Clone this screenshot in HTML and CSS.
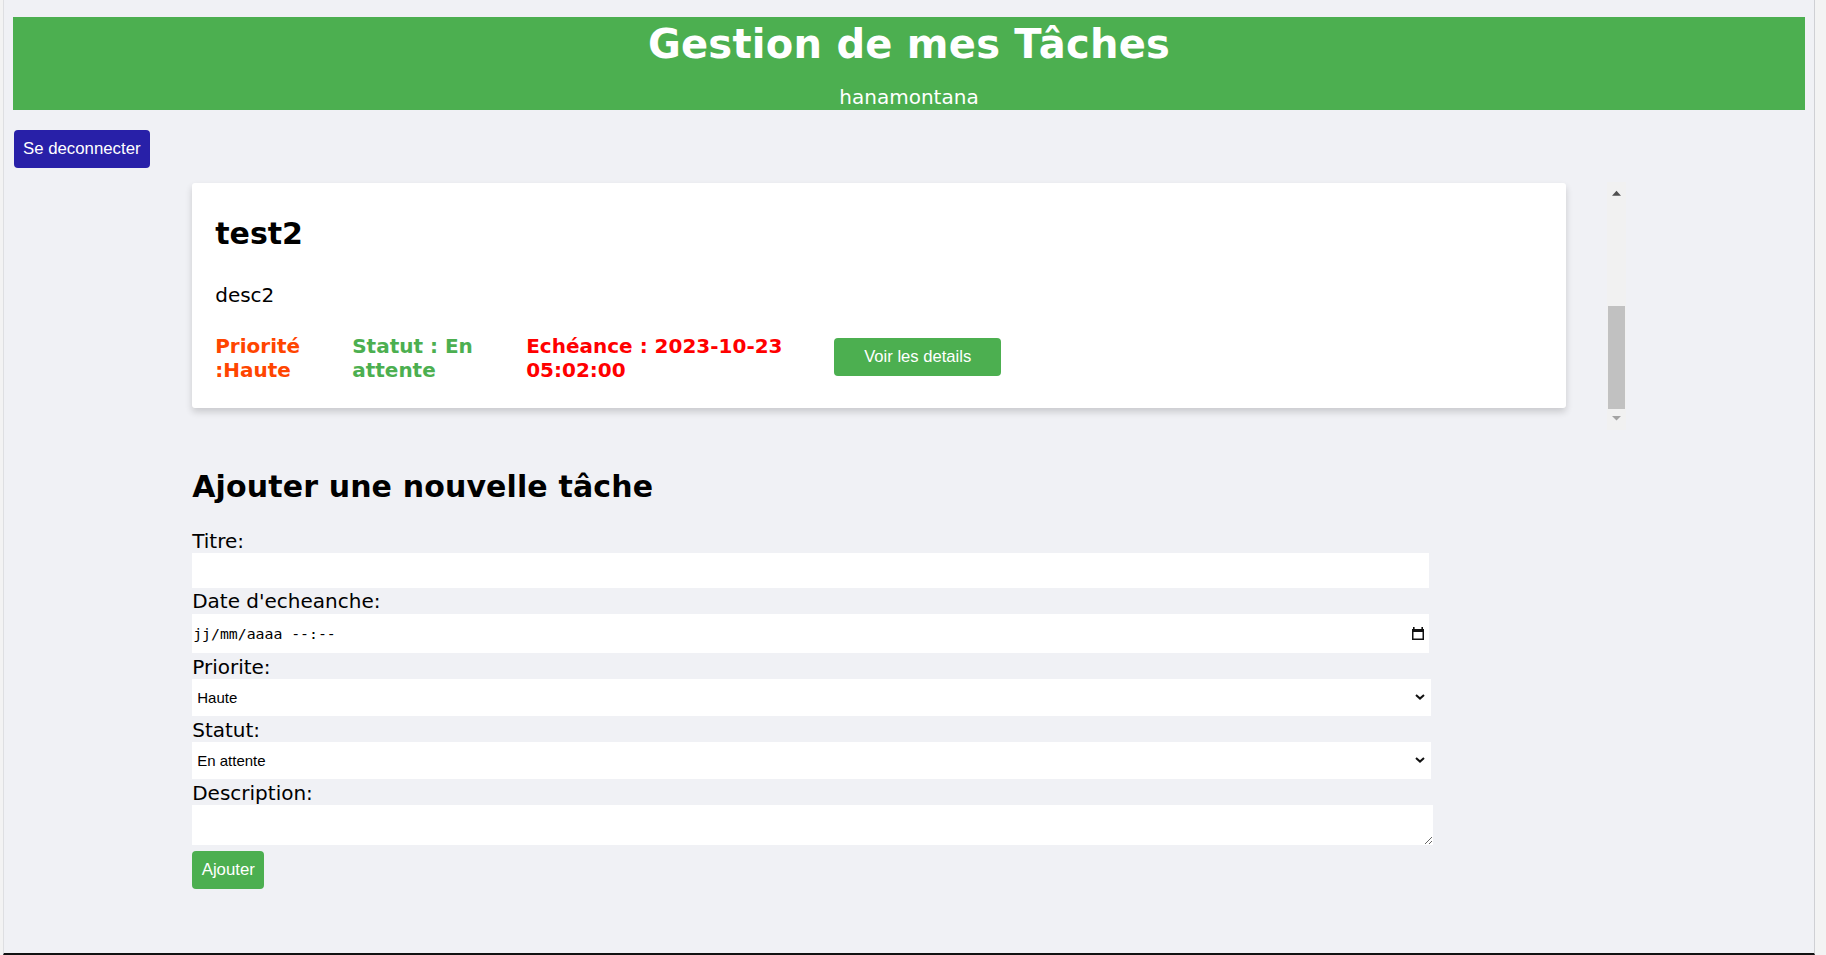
FILE: index.html
```html
<!DOCTYPE html>
<html lang="fr">
<head>
<meta charset="utf-8">
<title>Gestion de mes Tâches</title>
<link rel="stylesheet" href="styles.css">
</head>
<body>
<div class="viewport">
  <header class="banner">
    <h1 class="banner-title">Gestion de mes Tâches</h1>
    <p class="banner-user">hanamontana</p>
  </header>

  <button class="btn btn-logout" type="button">Se deconnecter</button>

  <main class="main">
    <div class="task-list">
      <div class="task-items">
        <article class="task-card">
          <h2 class="task-title">test2</h2>
          <p class="task-desc">desc2</p>
          <div class="task-meta">
            <div class="meta meta-priority">Priorité :Haute</div>
            <div class="meta meta-status">Statut : En attente</div>
            <div class="meta meta-due">Echéance : 2023-10-23 05:02:00</div>
            <button class="btn btn-details" type="button">Voir les details</button>
          </div>
        </article>
      </div>
      <div class="scrollbar" aria-hidden="true">
        <div class="sb-btn">
          <svg width="19" height="21" viewBox="0 0 19 21"><path d="M5 13.8 L14 13.8 L9.5 8.8 Z" fill="#505050"/></svg>
        </div>
        <div class="sb-track"><div class="sb-thumb"></div></div>
        <div class="sb-btn">
          <svg width="19" height="21" viewBox="0 0 19 21"><path d="M5 7 L14 7 L9.5 11.6 Z" fill="#a3a3a3"/></svg>
        </div>
      </div>
    </div>

    <section class="add-task">
      <h2 class="add-title">Ajouter une nouvelle tâche</h2>
      <form class="task-form">
        <div class="field field-titre">
          <label class="field-label" for="titre">Titre:</label>
          <input class="control control-text" id="titre" type="text">
        </div>
        <div class="field field-date">
          <label class="field-label" for="echeance">Date d'echeanche:</label>
          <div class="control control-date">
            <input class="date-text" id="echeance" type="text" placeholder="jj/mm/aaaa --:--">
            <svg class="date-icon" width="12" height="13" viewBox="0 0 12 13" aria-hidden="true">
              <rect x="0.75" y="2.75" width="10.5" height="9.5" fill="none" stroke="#111" stroke-width="1.5"/>
              <rect x="0" y="2" width="12" height="3" fill="#111"/>
              <rect x="1" y="0" width="1.6" height="2.5" fill="#111"/>
              <rect x="9.4" y="0" width="1.6" height="2.5" fill="#111"/>
            </svg>
          </div>
        </div>
        <div class="field field-priorite">
          <label class="field-label" for="priorite">Priorite:</label>
          <div class="select-wrap">
            <select class="control control-select" id="priorite">
              <option>Haute</option>
              <option>Moyenne</option>
              <option>Basse</option>
            </select>
            <svg class="select-arrow" width="10" height="6" viewBox="0 0 10 6" aria-hidden="true">
              <path d="M1 1 L5 4.6 L9 1" fill="none" stroke="#111" stroke-width="2"/>
            </svg>
          </div>
        </div>
        <div class="field field-statut">
          <label class="field-label" for="statut">Statut:</label>
          <div class="select-wrap">
            <select class="control control-select" id="statut">
              <option>En attente</option>
              <option>En cours</option>
              <option>Terminée</option>
            </select>
            <svg class="select-arrow" width="10" height="6" viewBox="0 0 10 6" aria-hidden="true">
              <path d="M1 1 L5 4.6 L9 1" fill="none" stroke="#111" stroke-width="2"/>
            </svg>
          </div>
        </div>
        <div class="field field-description">
          <label class="field-label" for="description">Description:</label>
          <textarea class="control control-area" id="description"></textarea>
        </div>
        <button class="btn btn-add" type="submit">Ajouter</button>
      </form>
    </section>
  </main>
</div>
</body>
</html>
```
FILE: styles.css
```css
* {
  box-sizing: border-box;
}

html {
  background: #f3f3f3;
}

body {
  margin: 0;
  font-family: "DejaVu Sans", Verdana, sans-serif;
  font-size: 20px;
  line-height: 23.75px;
  color: #000;
}

.viewport {
  margin-left: 3px;
  width: 1812px;
  height: 955px;
  background: #f0f1f5;
  border-left: 1px solid #dedfe2;
  border-right: 1px solid #cfd0d4;
  border-bottom: 2px solid #111;
  padding: 17px 9px 0;
  overflow: hidden;
}

/* ---------- banner ---------- */
.banner {
  background: #4caf50;
  color: #fff;
  text-align: center;
  padding-top: 4px;
}

.banner-title {
  margin: 0;
  font-size: 40px;
  line-height: 47.5px;
  font-weight: bold;
  letter-spacing: 0.25px;
}

.banner-user {
  margin: 17.5px 0 0;
  font-size: 20px;
  line-height: 23.75px;
}

/* ---------- buttons ---------- */
.btn {
  display: block;
  border: none;
  border-radius: 4px;
  color: #fff;
  font-family: "Liberation Sans", Arial, sans-serif;
  font-size: 16.8px;
  line-height: 18px;
  padding: 10px 9px;
  cursor: pointer;
}

.btn-logout {
  margin: 20.5px 0 0 1px;
  background: #2820a8;
}

.btn-details {
  flex-shrink: 0;
  width: 167px;
  margin-bottom: 3.7px;
  padding: 10px 0;
  font-size: 16.6px;
  background: #4caf50;
}

.btn-add {
  margin-top: 6.3px;
  padding: 10px 9.5px;
  background: #4caf50;
}

/* ---------- main ---------- */
.main {
  width: 80%;
  margin: 14px auto 0;
}

.task-list {
  display: flex;
  height: 248px;
}

.task-items {
  flex: 1;
  min-width: 0;
  padding-right: 41px;
}

.scrollbar {
  width: 19px;
  flex-shrink: 0;
  display: flex;
  flex-direction: column;
  background: #f1f1f1;
}

.sb-btn {
  height: 21px;
  flex-shrink: 0;
}

.sb-btn svg {
  display: block;
}

.sb-track {
  flex: 1;
  display: flex;
  flex-direction: column;
  justify-content: flex-end;
  padding: 0 1px;
}

.sb-thumb {
  height: 103px;
  background: #c1c1c1;
}

.task-card {
  margin-top: 1px;
  background: #fff;
  border-radius: 3px;
  box-shadow: 0 4px 7px rgba(0, 0, 0, 0.16);
  padding: 33px 22px 25.5px 23px;
}

.task-title {
  margin: 0 0 33px;
  font-size: 30px;
  line-height: 35px;
  font-weight: bold;
}

.task-desc {
  margin: 0 0 27px;
}

.task-meta {
  display: flex;
  align-items: center;
  gap: 20px;
}

.meta {
  flex-shrink: 0;
  font-weight: bold;
}

.meta-priority {
  width: 117px;
  color: #ff4500;
}

.meta-status {
  width: 154px;
  color: #4caf50;
}

.meta-due {
  width: 288px;
  color: #ff0000;
}

/* ---------- form ---------- */
.add-title {
  margin: 39px 0 24px;
  font-size: 30px;
  line-height: 35px;
  font-weight: bold;
  letter-spacing: 0.13px;
}

.field {
  display: flex;
  flex-direction: column;
  align-items: flex-start;
}

.field-label {
  display: block;
  padding-top: 1.8px;
  margin-bottom: -1.8px;
}

.field-priorite .field-label {
  margin-top: 2.5px;
  padding-top: 1.2px;
  margin-bottom: -1.2px;
}

.field-statut .field-label {
  margin-top: 2.3px;
  padding-top: 0.6px;
  margin-bottom: -0.6px;
}

.field-description .field-label {
  margin-top: 1.9px;
  padding-top: 1.2px;
  margin-bottom: -1.2px;
}

.control {
  border: none;
  background: #fff;
  color: #000;
  outline: none;
}

.control-text {
  margin-top: 1px;
  width: 1237px;
  height: 35px;
  padding: 0 5px;
  font-family: "Liberation Sans", Arial, sans-serif;
  font-size: 15px;
}

.control-date {
  margin-top: 2.3px;
  width: 1237px;
  height: 38.7px;
  display: flex;
  align-items: center;
  padding: 0 5px 0 1px;
}

.date-text {
  flex: 1;
  min-width: 0;
  border: none;
  background: transparent;
  padding: 0;
  outline: none;
  font-family: "DejaVu Sans Mono", monospace;
  font-size: 14.8px;
  color: #000;
}

.date-text::placeholder {
  color: #000;
  opacity: 1;
}

.date-icon {
  flex-shrink: 0;
  display: block;
}

.select-wrap {
  position: relative;
  width: 1239px;
}

.field-statut .select-wrap {
  margin-top: 0.3px;
}

.control-select {
  display: block;
  margin: 0;
  width: 100%;
  height: 36.7px;
  padding: 0 5px;
  appearance: none;
  -webkit-appearance: none;
  border-radius: 0;
  font-family: "Liberation Sans", Arial, sans-serif;
  font-size: 15px;
}

.select-arrow {
  position: absolute;
  right: 6px;
  top: 15px;
  pointer-events: none;
}

.control-area {
  display: block;
  margin-top: 0.7px;
  width: 1241px;
  height: 39.7px;
  padding: 2px;
  font-family: "Liberation Sans", Arial, sans-serif;
  font-size: 15px;
}
```
